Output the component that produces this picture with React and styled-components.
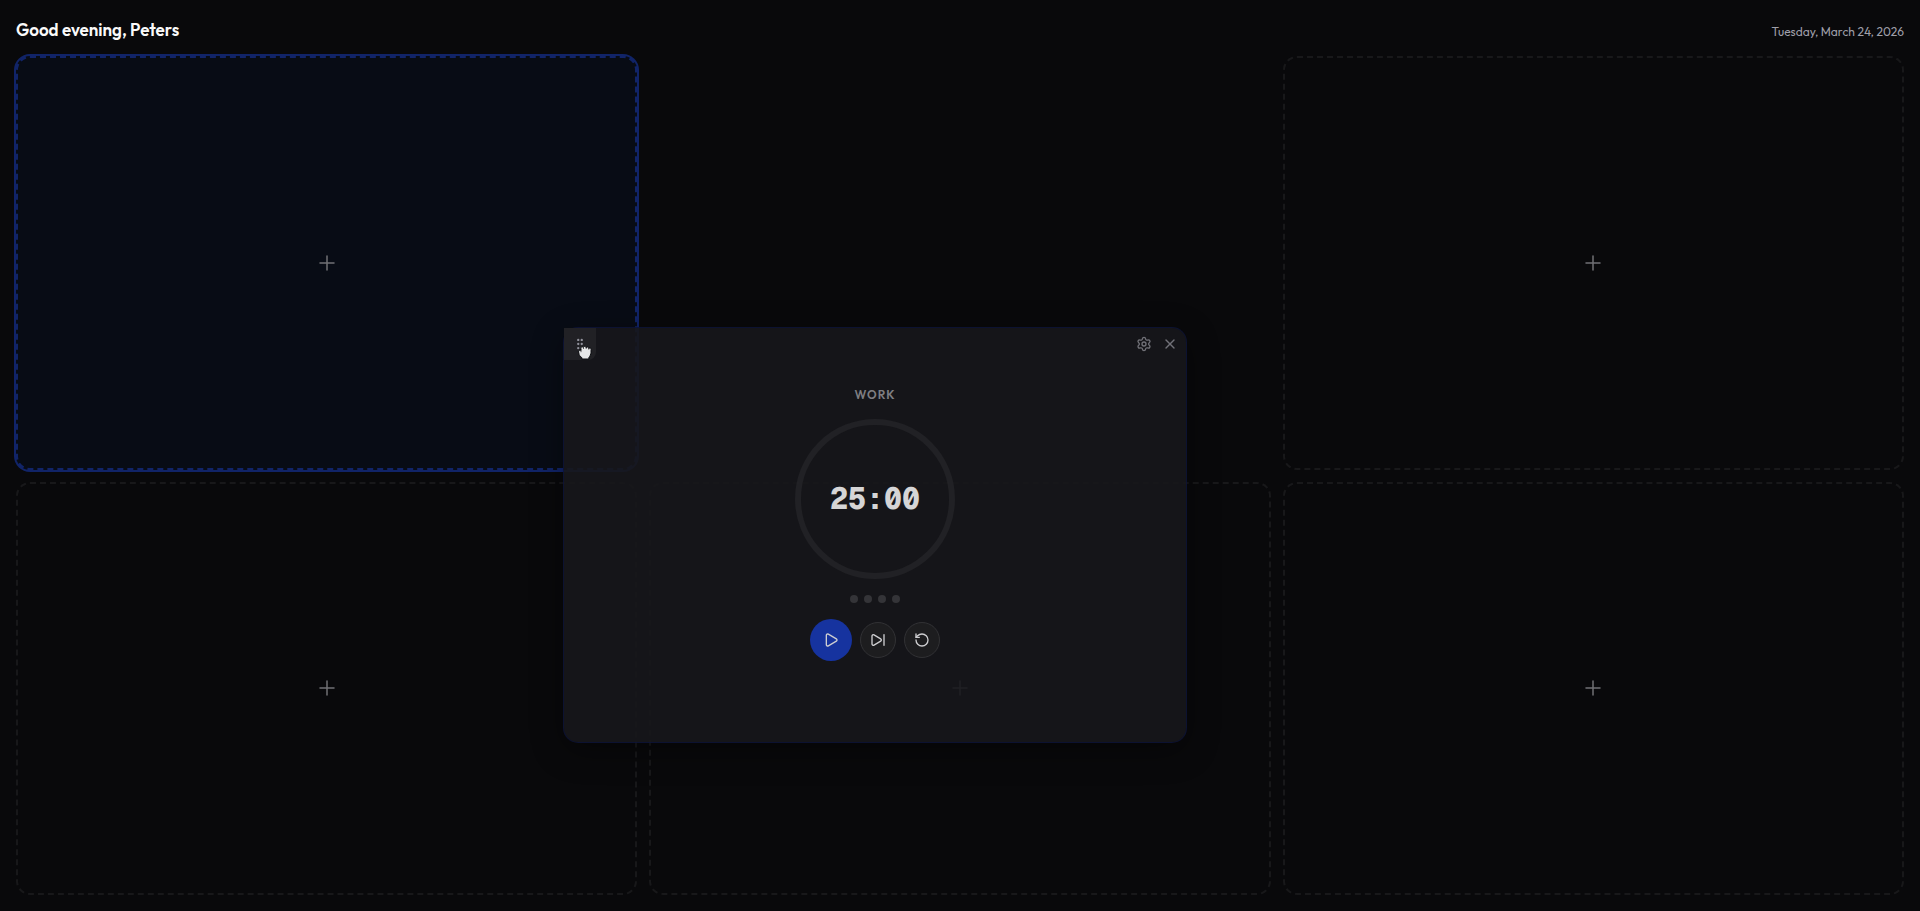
import React from "react";
import styled, { createGlobalStyle, css } from "styled-components";
import {
  GripVertical,
  Play,
  Plus,
  RotateCcw,
  Settings,
  SkipForward,
  X,
} from "lucide-react";

const GlobalStyle = createGlobalStyle`
  *, *::before, *::after { box-sizing: border-box; }
  body {
    margin: 0;
    background: #09090b;
    color: #fafafa;
    font-family: Outfit, Lato, "Liberation Sans", sans-serif;
  }
  button { font: inherit; padding: 0; border: 0; cursor: pointer; }
  svg { display: block; }
`;

const Page = styled.div`
  min-height: 100vh;
  display: flex;
  flex-direction: column;
  gap: 12px;
  padding: 16px;
  overflow: hidden;
`;

const Header = styled.header`
  display: flex;
  align-items: baseline;
  justify-content: space-between;
`;

const Greeting = styled.h1`
  margin: 0;
  font-size: 17px;
  line-height: 28px;
  font-weight: 600;
`;

const Today = styled.time`
  font-size: 12px;
  line-height: 20px;
  color: #9f9fa9;
`;

const Board = styled.main`
  flex: 1;
  display: grid;
  grid-template-columns: repeat(3, minmax(0, 1fr));
  grid-template-rows: repeat(2, minmax(360px, 1fr));
  gap: 12px;
`;

const EmptySlot = styled.button`
  display: grid;
  place-items: center;
  border: 2px dashed #18181a;
  border-radius: 14px;
  background: transparent;
  color: #707075;
  ${({ $target }) =>
    $target &&
    css`
      border-color: #112468;
      background: #080c15;
      box-shadow: 0 0 0 2px #112468;
    `}
`;

const Slot = styled.div`
  display: grid;
  z-index: 1;
`;

const Widget = styled.section`
  position: relative;
  display: flex;
  border-radius: 14px;
  background: #17171b;
  opacity: 0.9;
  box-shadow: 0 0 0 1px #0d1336, 0 8px 32px rgba(0, 0, 0, 0.4);
`;

const DragHandle = styled.button`
  position: absolute;
  top: 0;
  left: 0;
  display: grid;
  place-items: center;
  width: 32px;
  height: 32px;
  border-radius: 0 0 8px 0;
  background: #242427;
  color: #9f9fa9;
  cursor: grabbing;
`;

const HandCursor = styled.svg`
  position: absolute;
  top: 16px;
  left: 13px;
  pointer-events: none;
`;

const WidgetActions = styled.div`
  position: absolute;
  top: 4px;
  right: 4px;
  display: flex;
  gap: 2px;
`;

const ActionButton = styled.button`
  display: grid;
  place-items: center;
  width: 24px;
  height: 24px;
  background: transparent;
  color: #7d7d84;
`;

const Timer = styled.div`
  flex: 1;
  display: flex;
  flex-direction: column;
  align-items: center;
  justify-content: center;
  gap: 16px;
  padding-bottom: 21px;
`;

const Mode = styled.h2`
  margin: 0;
  font-size: 12px;
  line-height: 16px;
  font-weight: 600;
  letter-spacing: 1px;
  color: #8b8b90;
`;

const Dial = styled.div`
  display: grid;
  place-items: center;
  width: 160px;
  height: 160px;
  border: 6px solid #242428;
  border-radius: 50%;
  color: #ececec;
  font: 800 30px/32px "Geist Mono", "DejaVu Sans Mono", monospace;
`;

const Sessions = styled.div`
  display: flex;
  gap: 6px;
`;

const SessionDot = styled.span`
  width: 8px;
  height: 8px;
  border-radius: 50%;
  background: #39393d;
`;

const Controls = styled.div`
  display: flex;
  align-items: center;
  gap: 8px;
`;

const ControlButton = styled.button`
  display: grid;
  place-items: center;
  width: 36px;
  height: 36px;
  border: 1px solid #363639;
  border-radius: 50%;
  background: #202022;
  color: #e4e4e7;
  ${({ $primary }) =>
    $primary &&
    css`
      width: 42px;
      height: 42px;
      border: 0;
      background: #1838b0;
    `}
`;

function AddSlot({ target }) {
  return (
    <EmptySlot $target={target} aria-label="Add widget">
      <Plus size={24} strokeWidth={1.5} />
    </EmptySlot>
  );
}

function GrabbingHand() {
  return (
    <HandCursor width="16" height="16" viewBox="0 0 16 16" aria-hidden="true">
      <path
        d="M4 6.3C2.7 5.5 1.3 6.6 1.6 8l.5 2.4c.3 1.3 1.8 2.5 2.8 3.3V15h7v-1.500c1.3-1.500 2-3.200 2.100-5.100l.1-3.100c0-1.500-1.800-1.800-2.300-.7-.1-1.800-2.100-2-2.600-.8C8.800 1.900 6.600 1.900 6.400 3.500 5.500 2.200 3.700 2.900 3.900 4.300Z"
        fill="#ffffff"
        stroke="#08090c"
        strokeWidth="1"
        strokeLinejoin="round"
      />
      <path d="M6.500 3.800v1.200M9.200 3.800v1.200M11.800 4.600v1.100M4 5.800v2.400" stroke="#08090c" strokeWidth=".6" fill="none" />
    </HandCursor>
  );
}

function PomodoroWidget({ offset }) {
  return (
    <Widget
      aria-label="Pomodoro timer"
      style={{ transform: `translate(${offset.x}px, ${offset.y}px)` }}
    >
      <DragHandle aria-label="Move widget">
        <GripVertical size={14} />
        <GrabbingHand />
      </DragHandle>
      <WidgetActions>
        <ActionButton aria-label="Settings"><Settings size={16} /></ActionButton>
        <ActionButton aria-label="Remove widget"><X size={16} /></ActionButton>
      </WidgetActions>
      <Timer>
        <Mode>WORK</Mode>
        <Dial role="timer">25:00</Dial>
        <Sessions>
          {[1, 2, 3, 4].map((n) => <SessionDot key={n} />)}
        </Sessions>
        <Controls>
          <ControlButton $primary aria-label="Start"><Play size={16} /></ControlButton>
          <ControlButton aria-label="Skip"><SkipForward size={16} /></ControlButton>
          <ControlButton aria-label="Reset"><RotateCcw size={16} /></ControlButton>
        </Controls>
      </Timer>
    </Widget>
  );
}

export default function App() {
  return (
    <Page>
      <GlobalStyle />
      <Header>
        <Greeting>Good evening, Peters</Greeting>
        <Today dateTime="2026-03-24">Tuesday, March 24, 2026</Today>
      </Header>
      <Board>
        <AddSlot target />
        <Slot>
          <PomodoroWidget offset={{ x: -85, y: 272 }} />
        </Slot>
        <AddSlot />
        <AddSlot />
        <AddSlot />
        <AddSlot />
      </Board>
    </Page>
  );
}
